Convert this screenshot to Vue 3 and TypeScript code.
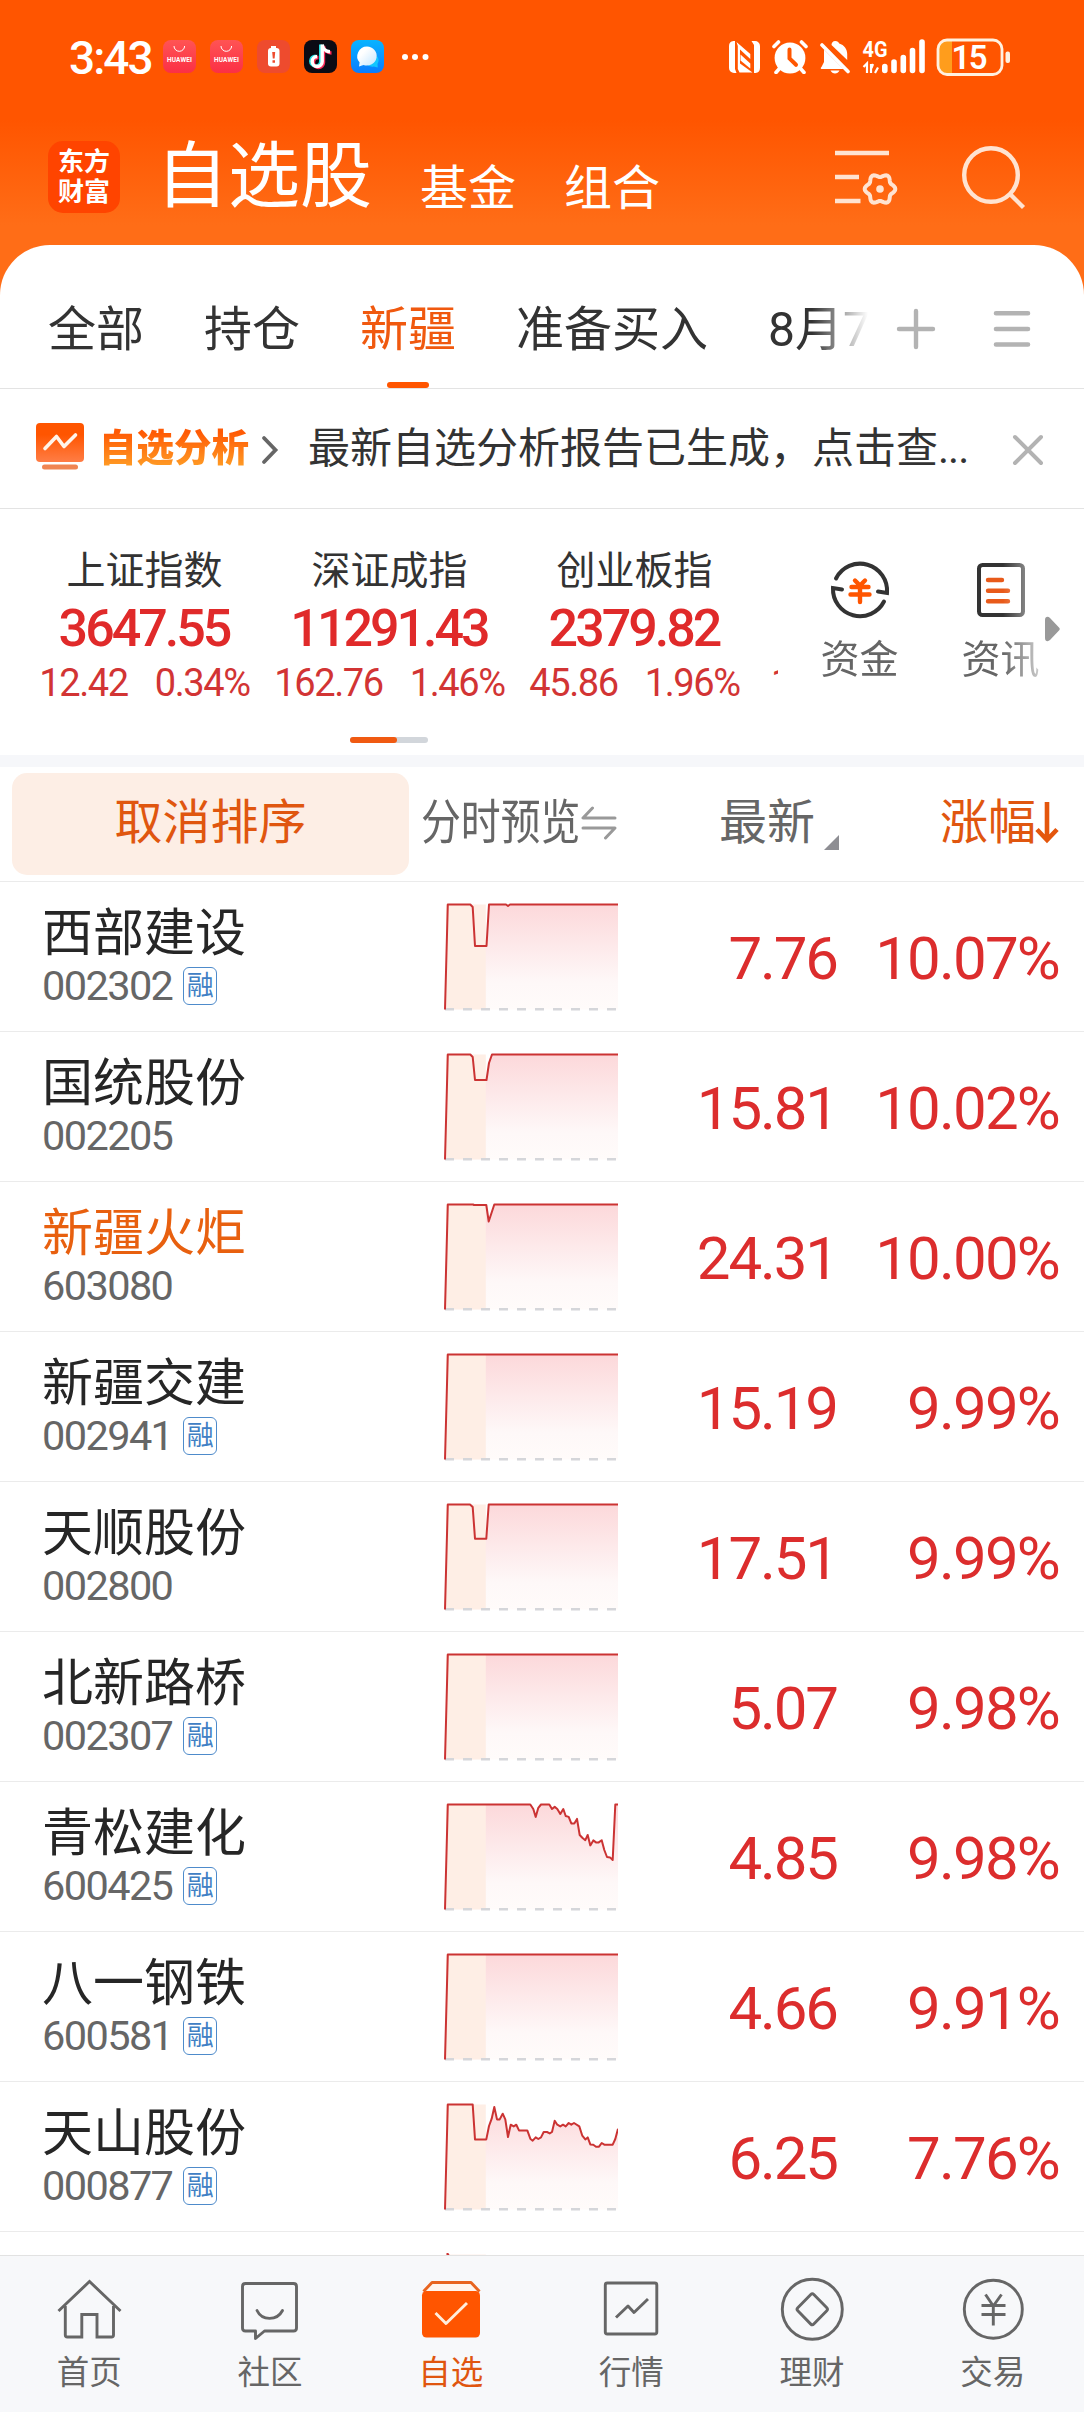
<script setup lang="ts">
interface Stock {
  name: string
  code: string
  margin: boolean
  price: string
  change: string
  line: string
  held?: boolean
}

interface MarketIndex {
  name: string
  value: string
  diff: string
  pct: string
}

// Every intraday line starts at the previous close and jumps to the daily limit.
const START = '1,106.5 3.8,1.5 '
const FLAT = '174,1.5'

const stocks: Stock[] = [
  { name: '西部建设', code: '002302', margin: true, price: '7.76', change: '10.07%', line: START + '26.3,1.5 28.7,4 31,43 42.5,43 45,1.5 62,1.5 64,3 66,1.5 ' + FLAT },
  { name: '国统股份', code: '002205', margin: false, price: '15.81', change: '10.02%', line: START + '26.3,1.5 28.7,4 31,27 42.5,27 45,10 48,1.5 ' + FLAT },
  { name: '新疆火炬', code: '603080', margin: false, price: '24.31', change: '10.00%', held: true, line: START + '29,1.5 30,2 42.3,2 44.7,18.5 50.3,1.5 ' + FLAT },
  { name: '新疆交建', code: '002941', margin: true, price: '15.19', change: '9.99%', line: START + FLAT },
  { name: '天顺股份', code: '002800', margin: false, price: '17.51', change: '9.99%', line: START + '26,1.5 28.7,4 31,35.7 42.3,35.7 44.7,1.5 ' + FLAT },
  { name: '北新路桥', code: '002307', margin: true, price: '5.07', change: '9.98%', line: START + FLAT },
  { name: '青松建化', code: '600425', margin: true, price: '4.85', change: '9.98%', line: START + '86.3,1.5 89.3,6 91.7,13.9 94.3,4.8 97,1.5 105.3,1.5 108,6 110.7,3.9 113.3,6 116.3,11 119.3,6 121.7,13 124.7,13.9 127.3,20.4 130.3,20.4 133,15.9 135.7,32 138.3,34.8 141.3,37.2 143.7,32 146.3,42.4 149.3,37.4 152,39.4 154.7,39.4 157.7,37.2 160.3,47 163,54 166,54.4 168.7,57 171.3,1.5 174,1.5' },
  { name: '八一钢铁', code: '600581', margin: true, price: '4.66', change: '9.91%', line: START + FLAT },
  { name: '天山股份', code: '000877', margin: true, price: '6.25', change: '7.76%', line: START + '28.7,1.5 31,36.4 42.3,36.4 45,23 47.7,15.7 50.3,4 53,16.4 55.7,16.4 58.7,10.7 61.3,16.4 64,34 66.7,21.7 69.7,23.4 72.3,21.7 75,27.4 83.3,27.4 86.3,35.7 88.7,37.7 91.7,34.4 94.3,36 97,34.4 99.7,29 103,29 105.7,30.4 108,29 110.7,17.7 113.3,21.7 116.3,23.4 119,21.7 121.7,23.4 124.7,20 127.3,21.7 130,20 135.3,23.4 138.3,32.7 141.3,36.4 143.7,34.4 146.3,41.4 149.3,41.7 152,43.7 155,43.7 157.7,40 160.3,41.7 168.7,41.7 171.3,36 174,25.7' },
]

const indices: MarketIndex[] = [
  { name: '上证指数', value: '3647.55', diff: '12.42', pct: '0.34%' },
  { name: '深证成指', value: '11291.43', diff: '162.76', pct: '1.46%' },
  { name: '创业板指', value: '2379.82', diff: '45.86', pct: '1.96%' },
]

const tabs = ['全部', '持仓', '新疆', '准备买入', '8月7']
const nav = ['首页', '社区', '自选', '行情', '理财', '交易']

// Six-lobed outline of the settings gear.
const gear = (() => {
  const pts: string[] = []
  for (let i = 0; i < 72; i++) {
    const a = (i * Math.PI) / 36
    const r = 13.6 + 1.7 * Math.cos(6 * a)
    pts.push(`${(45 + r * Math.cos(a)).toFixed(2)},${(42 + r * Math.sin(a)).toFixed(2)}`)
  }
  return pts.join(' ')
})()
</script>

<template>
  <div class="screen">
    <header class="top">
      <div class="status">
        <span class="time">3:43</span>
        <div class="apps">
          <svg v-for="n in 2" :key="n" width="33" height="33" viewBox="0 0 33 33">
            <defs><linearGradient id="hw" x1="0" y1="0" x2="0" y2="1"><stop offset="0" stop-color="#ff5454" /><stop offset="1" stop-color="#fb2f45" /></linearGradient></defs>
            <rect width="33" height="33" rx="8" fill="url(#hw)" />
            <path d="M11 6a5.3 5.3 0 0 0 10.600 0" fill="none" stroke="#fff" stroke-width="1" />
            <text x="16.500" y="21.500" text-anchor="middle" textLength="25" font-size="6.500" font-weight="700" fill="#fff">HUAWEI</text>
          </svg>
          <svg width="33" height="33" viewBox="0 0 33 33">
            <rect width="33" height="33" rx="8" fill="#ee4b2e" />
            <rect x="14" y="6" width="5" height="3" fill="#fff" />
            <rect x="11" y="8" width="11.500" height="18.500" rx="3" fill="#fff" />
            <path d="M15.200 12h3l-.6 6.500h-1.800zM15.500 20.300h2.500v2.400h-2.500z" fill="#ee4b2e" />
          </svg>
          <svg width="33" height="33" viewBox="0 0 33 33">
            <rect width="33" height="33" rx="8" fill="#0b0b14" />
            <g fill="none" stroke-width="3.400">
              <path d="M17.500 5v16.500a5 5 0 1 1-5-5M17.500 5c.5 4 3.500 7 7.500 7" stroke="#25e0e0" transform="translate(-.8 -.4)" />
              <path d="M18.500 5v16.500a5 5 0 1 1-5-5M18.500 5c.5 4 3.500 7 8 7" stroke="#fb2c5a" transform="translate(1 1)" />
              <path d="M18.200 4.500v17a5 5 0 1 1-5-5M18.200 4.500c.5 4 3.500 7 7.800 7.300" stroke="#fff" />
            </g>
          </svg>
          <svg width="33" height="33" viewBox="0 0 33 33">
            <defs>
              <linearGradient id="msg" x1="0" y1="0" x2="0" y2="1"><stop offset="0" stop-color="#08b4ff" /><stop offset="1" stop-color="#0a7cff" /></linearGradient>
              <linearGradient id="bub" x1="0" y1="0" x2="1" y2="1"><stop offset=".3" stop-color="#fff" /><stop offset="1" stop-color="#bfe4ff" /></linearGradient>
            </defs>
            <rect width="33" height="33" rx="8" fill="url(#msg)" />
            <path d="M26 16c3 4 1 7 .5 8l.3 3.500-4-1c-2 .5-4 0-6-1z" fill="#12c6ff" />
            <path d="M16 6.500a10 9.500 0 1 1-3.500 18.500L8 26.500l.6-4A9.700 9.700 0 0 1 16 6.500z" fill="url(#bub)" />
          </svg>
        </div>
        <svg class="more" width="28" height="8" viewBox="0 0 28 8"><g fill="#fff"><circle cx="4" cy="4" r="3" /><circle cx="14" cy="4" r="3" /><circle cx="24.500" cy="4" r="3" /></g></svg>

        <div class="sys">
          <svg width="31" height="32" viewBox="0 0 31 32">
            <path d="M6 0H4.500A5 5 0 0 0 0 5v22a5 5 0 0 0 5 5h2.500L6 28zM25 32h1.500a5 5 0 0 0 4.500-5V5a5 5 0 0 0-5-5h-3.500l2.500 4z" fill="#fff" />
            <path d="M6.500.5 21.500 14.500V27L9.500 17.500V28l1.500 3.500L6.500 28z" fill="none" />
            <path d="M7.500 1 21.300 13v5L11 8.500v14L23.500 31.500H10.500L8.800 28V5z" fill="#fff" />
            <path d="M11.500 13.500 21.300 22.500v5L11.500 19.500z" fill="#fff" />
          </svg>
          <svg width="36" height="34" viewBox="0 0 36 34">
            <circle cx="18" cy="18" r="15.400" fill="#fff" />
            <g stroke="#fff" stroke-width="3.600" stroke-linecap="round"><path d="M2 6.500 6.500 2M34 6.500 29.500 2M7.500 28.500 4 32.500M28.500 28.500l3.500 4" /></g>
            <path d="M17.500 9.500v9l6.500 6.300" fill="none" stroke="#ff5600" stroke-width="4" stroke-linecap="round" />
          </svg>
          <svg width="31" height="34" viewBox="0 0 31 34">
            <path d="M11.500 5c0-2 1.300-4 3.700-4s3.300 1.300 4 2.500c5 1.500 8 5.500 8 10.500v6z" fill="#fff" />
            <path d="M4 9.500 23.500 29H1.500c-1 0-1-1.500 0-2l2.500-5z" fill="#fff" />
            <path d="M2 5l26 26.500" stroke="#fff" stroke-width="3.600" stroke-linecap="round" />
            <path d="M10.500 30.500h9c-1 2-2.500 3-4.500 3s-3.500-1-4.500-3z" fill="#fff" />
          </svg>
          <svg class="signal" width="65" height="44" viewBox="0 -4 65 44">
            <text x="0.500" y="17.500" font-size="22.500" font-weight="700" textLength="25" lengthAdjust="spacingAndGlyphs" fill="#fff">4G</text>
            <path d="M1.500 28l3.500-3.500V34M9 25v9M9.500 29l1.500-4M13 34l3-5.500" fill="none" stroke="#fff" stroke-width="2.200" />
            <path d="M22.800 27.500v4M32 23v8.500M41.300 18.500v13M50.500 11.500v20M60 3v28.500" stroke="#fff" stroke-width="5.600" stroke-linecap="round" />
          </svg>
          <svg width="76" height="38" viewBox="0 0 76 38">
            <path d="M9 3h7v32H9a6 6 0 0 1-6-6V9a6 6 0 0 1 6-6z" fill="#ff9d1c" />
            <rect x="2" y="2" width="64" height="34.500" rx="9" fill="none" stroke="#fff1e0" stroke-width="2.800" />
            <rect x="69.500" y="13.500" width="4.500" height="11.500" rx="2" fill="#fff1e0" />
            <text x="33.500" y="31" text-anchor="middle" font-size="33" font-weight="600" textLength="36" fill="#fff">15</text>
          </svg>
        </div>
      </div>

      <div class="brandbar">
        <div class="logo"><span>东方</span><span>财富</span></div>
        <h1>自选股</h1>
        <span class="sub">基金</span>
        <span class="sub">组合</span>
        <svg class="cfg" width="64" height="64" viewBox="0 0 64 64" fill="none" stroke="#ffe3d1">
          <path d="M0 6h54M0 30h24M0 54h25.500" stroke-width="4.600" />
          <polygon :points="gear" stroke-width="4" stroke-linejoin="round" />
          <circle cx="45" cy="42" r="3.800" fill="#ffe3d1" stroke="none" />
        </svg>
        <svg class="find" width="64" height="66" viewBox="0 0 64 66" fill="none" stroke="#ffe3d1" stroke-width="4.400">
          <circle cx="29" cy="30" r="26.800" /><path d="M48 49l13.500 13.500" />
        </svg>
      </div>
    </header>

    <main class="sheet">
      <nav class="tabs">
        <div class="tablist">
          <span v-for="t in tabs" :key="t" :class="{ on: t === '新疆' }">{{ t }}</span>
        </div>
        <svg class="plus" width="40" height="42" viewBox="0 0 40 42"><path d="M3 21h34M20 3v36" stroke="#b3b3b3" stroke-width="4.400" stroke-linecap="round" /></svg>
        <svg class="burger" width="40" height="42" viewBox="0 0 40 42"><path d="M4 5.200h32M4 21h32M4 36.500h32" stroke="#b3b3b3" stroke-width="4.600" stroke-linecap="round" /></svg>
      </nav>

      <section class="notice">
        <svg class="report" width="48" height="48" viewBox="0 0 48 48">
          <defs><linearGradient id="an" x1="0" y1="0" x2="0" y2="1"><stop offset=".3" stop-color="#ff5500" /><stop offset="1" stop-color="#ff7d45" /></linearGradient></defs>
          <rect y="0" width="48" height="39" rx="4" fill="url(#an)" />
          <path d="M9 25.500 20.500 13.500l7.500 10L39.500 12" fill="none" stroke="#fff4ea" stroke-width="3.600" stroke-linecap="round" stroke-linejoin="round" />
          <rect x="6" y="41.500" width="36" height="5" rx="2.500" fill="#f08552" />
        </svg>
        <b>自选分析</b>
        <svg class="chev" width="18" height="30" viewBox="0 0 18 30"><path d="M3 3l11.500 12L3 27" fill="none" stroke="#666" stroke-width="3.800" stroke-linecap="round" /></svg>
        <p>最新自选分析报告已生成，点击查<span class="dots">...</span></p>
        <svg class="close" width="32" height="32" viewBox="0 0 32 32"><path d="M3 3l26 26M29 3 3 29" stroke="#b3b3b3" stroke-width="4" stroke-linecap="round" /></svg>
      </section>

      <section class="market">
        <div class="quotes">
          <div class="strip">
            <div v-for="i in indices" :key="i.name" class="quote">
              <span class="qname">{{ i.name }}</span>
              <strong>{{ i.value }}</strong>
              <span class="qdiff"><i>{{ i.diff }}</i><i>{{ i.pct }}</i></span>
            </div>
            <div class="quote next"><span class="qdiff"><i>1</i></span></div>
          </div>
          <div class="pager"><span></span></div>
        </div>
        <div class="shortcuts">
          <div class="short">
            <svg width="64" height="64" viewBox="0 0 64 64" fill="none">
              <g stroke="#333" stroke-width="4">
                <path d="M8 20.500A27 27 0 0 1 59 35l-9-1.500" stroke-linecap="round" />
                <path d="M56 43.500A27 27 0 0 1 5 30l9 1.500" stroke-linecap="round" />
              </g>
              <path d="M27 22.500l5 5 5-5M23.500 29h17M22.500 36.500h19M32 28v16" stroke="#ff5500" stroke-width="4.400" stroke-linecap="round" />
            </svg>
            <span>资金</span>
          </div>
          <div class="short">
            <svg width="64" height="64" viewBox="0 0 64 64" fill="none">
              <rect x="10" y="7" width="44" height="50" rx="3.500" stroke="#333" stroke-width="4" />
              <path d="M19 22h14M19 32.700h20M19 43.200h20" stroke="#e85a1a" stroke-width="4.400" stroke-linecap="round" />
            </svg>
            <span>资讯</span>
          </div>
        </div>
        <svg class="tri" width="16" height="26" viewBox="0 0 16 26"><path d="M0 4c0-3.500 3-4 5-2l9 9.500c1 1 1 2 0 3L5 24c-2 2-5 1.500-5-2z" fill="#999" /></svg>
      </section>

      <section class="cols">
        <button type="button">取消排序</button>
        <span class="preview"><em>分时预览</em></span>
        <svg class="swap" width="36" height="34" viewBox="0 0 36 34" fill="none" stroke="#999" stroke-width="3" stroke-linecap="round" stroke-linejoin="round">
          <path d="M11.500 2 2 12h32M2 22h32L24.500 32" />
        </svg>
        <span class="last">最新</span>
        <svg class="corner" width="15" height="15" viewBox="0 0 15 15"><path d="M15 0v15H0z" fill="#8e8e93" /></svg>
        <span class="rise">涨幅</span>
        <svg class="down" width="24" height="42" viewBox="0 0 24 42" fill="none" stroke="#e4560c" stroke-width="4.600"><path d="M12 0v38M2 27.500l10 10.500 10-10.500" /></svg>
      </section>

      <section class="list">
        <svg class="defs" width="0" height="0">
          <defs><linearGradient id="area" gradientUnits="userSpaceOnUse" x1="0" y1="1" x2="0" y2="106"><stop offset="0" stop-color="#fcd8da" /><stop offset=".75" stop-color="#fef8f8" /><stop offset="1" stop-color="#fffbfa" /></linearGradient></defs>
        </svg>
        <div v-for="s in stocks" :key="s.code" class="row">
          <div class="who">
            <span class="name" :class="{ held: s.held }">{{ s.name }}</span>
            <span class="code">{{ s.code }}<small v-if="s.margin">融</small></span>
          </div>
          <svg width="174" height="108" viewBox="0 0 174 108">
            <polygon :points="s.line + ' 174,106.500'" fill="url(#area)" />
            <rect x="2" y="1.500" width="39.800" height="105" fill="#feeee5" />
            <path d="M1 106.300h172" stroke="#d5d6da" stroke-width="2.400" stroke-dasharray="9 9" />
            <polyline :points="s.line" fill="none" stroke="#cb3333" stroke-width="2" stroke-linejoin="round" />
          </svg>
          <span class="price">{{ s.price }}</span>
          <span class="change">{{ s.change }}</span>
        </div>
        <div class="row peek">
          <svg width="174" height="108" viewBox="0 0 174 108">
            <rect x="2" y="1.500" width="39.800" height="105" fill="#fdeee8" />
            <path d="M1 106 3.500.5 5.500 4" fill="none" stroke="#cb3333" stroke-width="2" />
          </svg>
        </div>
      </section>
    </main>

    <footer class="nav">
      <div v-for="(n, k) in nav" :key="n" class="item" :class="{ on: k === 2 }">
        <svg width="66" height="66" viewBox="0 0 66 66" fill="none" stroke="#666" stroke-width="2.900" stroke-linejoin="round">
          <template v-if="k === 0">
            <path d="M1.500 35 32.500 5.500 63.500 35" stroke-linejoin="miter" />
            <path d="M8.300 30v29q0 2 2 2h14.500V38.500H40V61h14.500q2 0 2-2V30" stroke-linejoin="miter" />
          </template>
          <template v-else-if="k === 1">
            <path d="M7.500 7.500h48q3 0 3 3V52q0 3-3 3H26.500l-9 7.500V55h-10q-3 0-3-3V10.500q0-3 3-3z" />
            <path d="M19 34.500c5 10.500 20 10.500 25.500 0" stroke-linecap="round" />
          </template>
          <template v-else-if="k === 2">
            <path d="M4.500 15.500 13 6.500h39l8.500 9" fill="#fff5ee" stroke="#e8641f" />
            <rect x="3" y="15" width="58" height="46.500" rx="4.500" fill="#ff5500" stroke="none" />
            <path d="M16.500 37 27 47.500 48 27" stroke="#ffeedd" />
          </template>
          <template v-else-if="k === 3">
            <rect x="6.300" y="7" width="51.500" height="51" rx="2" />
            <path d="M17 41.500 29 30l6 6.500L49 23" />
          </template>
          <template v-else-if="k === 4">
            <circle cx="32.300" cy="33.300" r="30" />
            <path d="M30.800 18.500q1.500-1.500 3 0l13 13.300q1.500 1.500 0 3l-13 13.300q-1.500 1.500-3 0l-13-13.300q-1.500-1.500 0-3z" />
          </template>
          <template v-else>
            <circle cx="32.300" cy="33.300" r="29" />
            <path d="M24.500 18.500 32.300 30l8.200-11.500M20.500 29.500h24M20.500 38.500h24M32.300 29v20.500" />
          </template>
        </svg>
        <span>{{ n }}</span>
      </div>
    </footer>
  </div>
</template>

<style>
body {
  margin: 0;
}
</style>

<style scoped>
.screen {
  width: 1084px;
  height: 2412px;
  overflow: hidden;
  display: flex;
  flex-direction: column;
  background: #fff;
  color: #333;
  font-family: Roboto, "Noto Sans CJK SC", sans-serif;
  line-height: 1;
}
svg {
  display: block;
  flex: none;
}
span, strong, b, p {
  white-space: nowrap;
}
.top {
  height: 295px;
  margin-bottom: -50px;
  flex: none;
  background: linear-gradient(#ff5500 0, #ff5500 120px, #ff6d17 225px, #ff6d17 100%);
  color: #fff;
}
.status {
  height: 112px;
  display: flex;
  align-items: center;
  padding: 1px 72px 0 69px;
  box-sizing: border-box;
}
.time {
  width: 94px;
  padding-top: 2px;
  font-size: 46px;
  font-weight: 500;
  letter-spacing: -2px;
}
.apps {
  display: flex;
  gap: 14px;
}
.more {
  margin-left: 17px;
}
.sys {
  margin-left: auto;
  display: flex;
  align-items: center;
  gap: 12px;
}
.sys .signal {
  margin-right: -3px;
  margin-left: -1px;
}
.brandbar {
  height: 130px;
  display: flex;
  align-items: center;
  padding-left: 48px;
}
.logo {
  width: 72px;
  height: 72px;
  border-radius: 15px;
  background: #ff4400;
  display: flex;
  flex-direction: column;
  align-items: center;
  justify-content: center;
  font-size: 26px;
  font-weight: 700;
  line-height: 30.5px;
}
h1 {
  margin: 0 0 0 36px;
  font-size: 72px;
  font-weight: 400;
  white-space: nowrap;
}
.sub {
  font-size: 48px;
  margin: 24px 0 0 48px;
}
.cfg {
  margin: 4px 0 0 175px;
}
.find {
  margin: 2px 0 0 63px;
}
.sheet {
  flex: 1;
  min-height: 0;
  display: flex;
  flex-direction: column;
  background: #fff;
  border-radius: 50px 50px 0 0;
  overflow: hidden;
}
.tabs {
  height: 143px;
  flex: none;
  border-bottom: 1px solid #e3e3e3;
  display: flex;
  align-items: center;
}
.tablist {
  width: 868px;
  height: 143px;
  box-sizing: border-box;
  padding-left: 48px;
  display: flex;
  gap: 60px;
  overflow: hidden;
  font-size: 48px;
  line-height: 170px;
  -webkit-mask-image: linear-gradient(90deg, #000 812px, transparent 868px);
  mask-image: linear-gradient(90deg, #000 812px, transparent 868px);
}
.tablist span {
  flex: none;
  display: flex;
  flex-direction: column;
  align-items: center;
}
.tablist .on {
  color: #f0590f;
}
.tablist .on::after {
  content: "";
  width: 42px;
  height: 6px;
  border-radius: 3px;
  background: #ff5500;
  margin-top: -33px;
}
.plus {
  margin: 24px 0 0 28px;
}
.burger {
  margin: 24px 0 0 56px;
}
.notice {
  height: 119px;
  flex: none;
  border-bottom: 1px solid #e3e3e3;
  display: flex;
  align-items: center;
  padding-left: 36px;
}
.report {
  margin-top: -3px;
}
.notice b {
  margin-left: 15px;
  margin-top: -2px;
  font-size: 37.500px;
  font-weight: 900;
  line-height: 56px;
  background: linear-gradient(#ff5a05 22%, #ff9a24 82%);
  -webkit-background-clip: text;
  background-clip: text;
  color: transparent;
}
.chev {
  margin: 2px 0 0 12px;
}
.notice p {
  margin: 0 0 0 29px;
  width: 662px;
  font-size: 42px;
}
.dots {
  letter-spacing: -1px;
}
.close {
  margin: 2px 0 0 42px;
}
.market {
  height: 246px;
  flex: none;
  border-bottom: 12px solid #f6f7fa;
  display: flex;
}
.quotes {
  width: 778px;
  flex: none;
}
.strip {
  padding: 36px 0 0 22px;
  display: flex;
  overflow: hidden;
  height: 204px;
  box-sizing: border-box;
}
.quote {
  width: 245px;
  flex: none;
  display: flex;
  flex-direction: column;
  align-items: center;
}
.qname {
  font-size: 39px;
  line-height: 52px;
}
.quote strong {
  color: #e02a2a;
  font-size: 52px;
  font-weight: 500;
  line-height: 64px;
  letter-spacing: -3px;
  padding-right: 1px;
}
.qdiff {
  display: flex;
  gap: 27px;
  color: #d23434;
  font-size: 38px;
  line-height: 45px;
  letter-spacing: -1.400px;
}
.qdiff i {
  font-style: normal;
}
.next {
  align-items: flex-start;
  padding: 116px 0 0 14px;
}
.pager {
  width: 78px;
  height: 6px;
  margin: 24px 0 0 350px;
  border-radius: 3px;
  background: #d2d6db;
}
.pager span {
  display: block;
  width: 47px;
  height: 6px;
  border-radius: 3px;
  background: #f05a12;
}
.shortcuts {
  width: 261px;
  padding-top: 49px;
  flex: none;
  display: flex;
  -webkit-mask-image: linear-gradient(90deg, #000 225px, rgba(0, 0, 0, .35) 261px);
  mask-image: linear-gradient(90deg, #000 225px, rgba(0, 0, 0, .35) 261px);
  overflow: hidden;
}
.short {
  width: 141px;
  flex: none;
  display: flex;
  flex-direction: column;
  align-items: center;
  margin-left: 11px;
}
.short + .short {
  margin-left: 0;
}
.short span {
  margin-top: 19px;
  font-size: 39px;
  color: #666;
}
.tri {
  margin: 107px 0 0 6px;
}
.cols {
  height: 114px;
  flex: none;
  border-bottom: 1px solid #ebebeb;
  box-sizing: content-box;
  display: flex;
  align-items: center;
  padding-left: 12px;
  font-size: 48px;
  color: #666;
}
.cols button {
  width: 397px;
  height: 102px;
  padding: 0 0 2px;
  flex: none;
  border: 0;
  border-radius: 15px;
  background: #fdeee5;
  color: #e0560f;
  font: inherit;
}
.preview {
  width: 160px;
  margin: -2px 0 0 12px;
}
.preview em {
  display: inline-block;
  font-style: normal;
  transform: scaleX(.83);
  transform-origin: 0 50%;
}
.swap {
  margin-top: -2px;
}
.last {
  margin: -2px 0 0 102px;
}
.corner {
  margin: 36px 0 0 9px;
}
.rise {
  margin: -2px 0 0 101px;
  color: #e0560f;
}
.down {
  margin: -2px 0 0 -1px;
}
.list {
  flex: 1;
  min-height: 0;
  overflow: hidden;
}
.row {
  height: 149px;
  border-bottom: 1px solid #ebebeb;
  display: flex;
}
.who {
  width: 402px;
  padding: 25px 0 0 42px;
  display: flex;
  flex-direction: column;
}
.row > svg {
  margin-top: 21px;
}
.name {
  font-size: 51px;
  line-height: 54px;
  color: #262626;
}
.name.held {
  color: #e8600f;
}
.code {
  display: flex;
  align-items: center;
  height: 38px;
  margin-top: 6px;
  font-size: 41.500px;
  letter-spacing: -1.600px;
  color: #666;
}
.code small {
  width: 32px;
  height: 36px;
  margin-left: 11px;
  border: 1px solid #4e8bcb;
  border-radius: 6px;
  font-size: 27px;
  line-height: 36px;
  text-align: center;
  letter-spacing: 0;
  color: #4080c4;
}
.price, .change {
  width: 219px;
  text-align: right;
  font-size: 60px;
  line-height: 154px;
  letter-spacing: -2.100px;
  color: #dc2d2d;
}
.change {
  width: 222px;
  letter-spacing: -1.800px;
}
.peek > svg {
  margin-left: 444px;
}
.nav {
  height: 156px;
  flex: none;
  border-top: 1px solid #e2e2e2;
  background: #f7f8fa;
  display: flex;
  color: #666;
}
.item {
  flex: 1;
  padding-top: 20px;
  display: flex;
  flex-direction: column;
  align-items: center;
  font-size: 32.500px;
}
.item span {
  margin: 15px 2px 0 0;
}
.item.on {
  color: #e0560f;
}
</style>
